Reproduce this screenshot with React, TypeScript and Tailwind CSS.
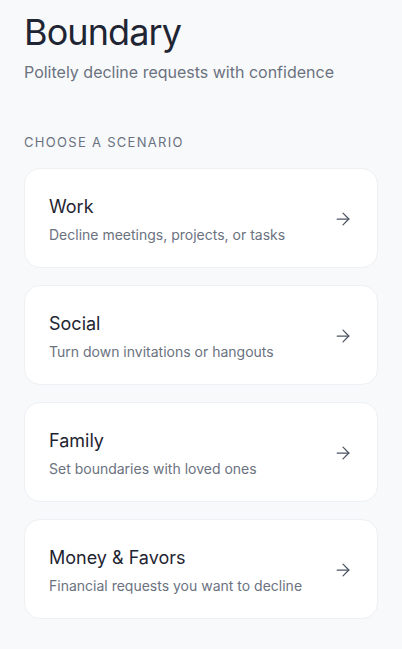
import { ArrowRight } from "lucide-react";

const scenarios = [
  { title: "Work", desc: "Decline meetings, projects, or tasks" },
  { title: "Social", desc: "Turn down invitations or hangouts" },
  { title: "Family", desc: "Set boundaries with loved ones" },
  { title: "Money & Favors", desc: "Financial requests you want to decline" },
];

export default function App() {
  return (
    <div className="min-h-screen bg-[#f8f9fb] px-6 pt-3 pb-10 font-['Inter',sans-serif]">
      {/* Header */}
      <h1 className="text-4xl leading-10 font-normal text-[#1f2532] tracking-tight">Boundary</h1>
      <p className="mt-2 text-base leading-6 text-[#6b7280]">Politely decline requests with confidence</p>

      {/* Scenarios */}
      <h2 className="mt-12 text-[13px] leading-5 tracking-[0.1em] uppercase text-[#6b7280]">Choose a scenario</h2>
      <div className="mt-4 flex flex-col gap-[17px]">
        {scenarios.map((s) => (
          <button
            key={s.title}
            className="flex items-center justify-between rounded-2xl border border-[#eef0f3] bg-white px-6 pt-6 pb-[22px] text-left"
          >
            <div>
              <div className="text-lg leading-7 text-[#1f2532]">{s.title}</div>
              <div className="mt-1 text-sm leading-5 text-[#6b7280]">{s.desc}</div>
            </div>
            <ArrowRight className="h-5 w-5 text-[#4b5563]" strokeWidth={1.5} />
          </button>
        ))}
      </div>
    </div>
  );
}
